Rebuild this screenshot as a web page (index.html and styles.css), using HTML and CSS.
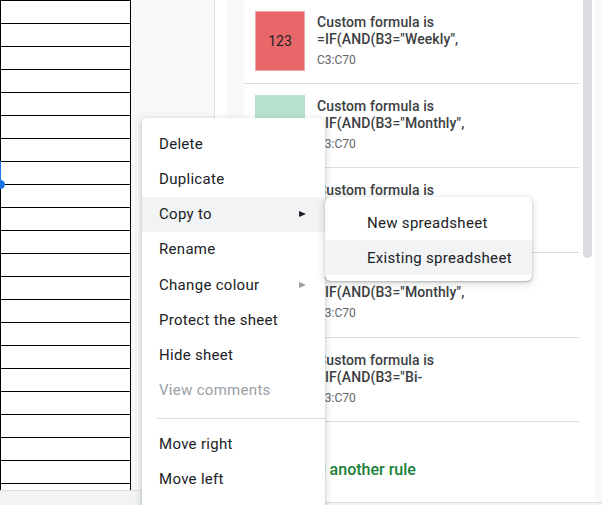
FILE: index.html
```html
<!DOCTYPE html>
<html>
<head>
<meta charset="utf-8">
<link rel="stylesheet" href="styles.css">
</head>
<body>
<div class="app">
  <div class="left">
    <div class="sheet">
      <div class="col">
        <div class="row"></div><div class="row"></div><div class="row"></div><div class="row"></div>
        <div class="row"></div><div class="row"></div><div class="row"></div><div class="row"></div>
        <div class="row"></div><div class="row"></div><div class="row"></div><div class="row"></div>
        <div class="row"></div><div class="row"></div><div class="row"></div><div class="row"></div>
        <div class="row"></div><div class="row"></div><div class="row"></div><div class="row"></div>
        <div class="row"></div><div class="row"></div>
      </div>
      <div class="gutter"></div>
    </div>
    <div class="tabbar"></div>
  </div>
  <div class="sidebar">
    <div class="side-main">
      <div class="pad"></div>
      <div class="gap"></div>
      <div class="card">
        <div class="rule">
          <div class="swatch red">123</div>
          <div class="rule-text">
            <div class="rule-title">Custom formula is<br>=IF(AND(B3="Weekly",</div>
            <div class="rule-range">C3:C70</div>
          </div>
        </div>
        <div class="rule">
          <div class="swatch green"></div>
          <div class="rule-text">
            <div class="rule-title">Custom formula is<br>=IF(AND(B3="Monthly",</div>
            <div class="rule-range">C3:C70</div>
          </div>
        </div>
        <div class="rule tall">
          <div class="swatch green"></div>
          <div class="rule-text">
            <div class="rule-title">Custom formula is<br>=IF(AND(B3="Weekly",</div>
            <div class="rule-range">C3:C70</div>
          </div>
        </div>
        <div class="rule tall">
          <div class="swatch red"></div>
          <div class="rule-text">
            <div class="rule-title">Custom formula is<br>=IF(AND(B3="Monthly",</div>
            <div class="rule-range">C3:C70</div>
          </div>
        </div>
        <div class="rule">
          <div class="swatch green"></div>
          <div class="rule-text">
            <div class="rule-title">Custom formula is<br>=IF(AND(B3="Bi-</div>
            <div class="rule-range">C3:C70</div>
          </div>
        </div>
        <div class="add-rule">
          <svg class="plus" width="18" height="18" viewBox="0 0 24 24"><path d="M19 13h-6v6h-2v-6H5v-2h6V5h2v6h6v2z" fill="#188038"/></svg>
          <span>Add another rule</span>
        </div>
        <div class="scrollbar"></div>
      </div>
      <div class="edge"></div>
    </div>
    <div class="side-bottom"></div>
  </div>
</div>

<div class="sel-line"></div>
<div class="sel-dot"></div>

<div class="menu">
  <div class="item">Delete</div>
  <div class="item">Duplicate</div>
  <div class="item active">Copy to <span class="arrow"></span></div>
  <div class="item">Rename</div>
  <div class="item">Change colour <span class="arrow dim"></span></div>
  <div class="item">Protect the sheet</div>
  <div class="item">Hide sheet</div>
  <div class="item disabled">View comments</div>
  <div class="sep"></div>
  <div class="item">Move right</div>
  <div class="item">Move left</div>
</div>

<div class="submenu">
  <div class="sub-item">New spreadsheet</div>
  <div class="sub-item active">Existing spreadsheet</div>
</div>
</body>
</html>
```

FILE: styles.css
```css
html, body {
  margin: 0;
  padding: 0;
}
body {
  width: 602px;
  height: 505px;
  overflow: hidden;
  position: relative;
  font-family: Roboto, "Liberation Sans", Arial, sans-serif;
  background: #fff;
}
.app {
  display: flex;
  height: 505px;
}
.left {
  width: 214px;
  display: flex;
  flex-direction: column;
}
.sheet {
  height: 490px;
  display: flex;
}
.col {
  width: 131px;
  box-sizing: border-box;
  border-left: 1px solid #000;
  border-right: 1px solid #000;
  overflow: hidden;
  background: #fff;
}
.row {
  height: 23px;
  box-sizing: border-box;
  border-top: 1px solid #000;
}
.gutter {
  flex: 1;
  background: #f7f8f7;
}
.tabbar {
  flex: 1;
  background: #f1f3f4;
  border-top: 1px solid #dadce0;
}
.sidebar {
  flex: 1;
  display: flex;
  flex-direction: column;
  border-left: 1px solid #e2e3e2;
}
.side-main {
  height: 502px;
  display: flex;
}
.pad {
  width: 12px;
  background: #fff;
}
.gap {
  width: 17px;
  background: #f8f9fb;
}
.card {
  width: 351px;
  background: #fff;
  border-radius: 0 0 8px 0;
  position: relative;
  overflow: hidden;
}
.edge {
  flex: 1;
  background: #f8f9fb;
}
.side-bottom {
  flex: 1;
  background: #f1f3f4;
  border-top: 1px solid #dadce0;
}
.rule {
  display: flex;
  margin-right: 16px;
  padding: 11px 0 12px 11px;
  border-bottom: 1px solid #dadce0;
}
.rule.tall {
  padding-bottom: 13px;
}
.swatch {
  width: 50px;
  height: 60px;
  box-sizing: border-box;
  flex: none;
  display: flex;
  align-items: center;
  justify-content: center;
  font-size: 14px;
  color: #202124;
}
.swatch.red {
  background: #e8686a;
  border: 1px solid #f0a9aa;
}
.swatch.green {
  background: #b7e1cd;
}
.rule-text {
  margin-left: 12px;
  padding-top: 3px;
}
.rule-title {
  font-size: 14px;
  line-height: 17px;
  font-weight: 500;
  color: #3c4043;
  letter-spacing: 0.1px;
}
.rule-range {
  margin-top: 4px;
  font-size: 12px;
  line-height: 16px;
  color: #5f6368;
}
.add-rule {
  display: flex;
  align-items: center;
  gap: 10px;
  padding: 38px 0 0 25px;
  font-size: 16px;
  line-height: 20px;
  font-weight: 500;
  color: #188038;
}
.plus {
  flex: none;
}
.scrollbar {
  position: absolute;
  left: 339px;
  top: 0;
  width: 9px;
  height: 258px;
  background: #dadce0;
  border-radius: 0 0 5px 5px;
}
.sel-line {
  position: absolute;
  left: 0;
  top: 161px;
  width: 1px;
  height: 23px;
  background: #1a73e8;
}
.sel-dot {
  position: absolute;
  left: -4px;
  top: 180px;
  width: 9px;
  height: 9px;
  border-radius: 50%;
  background: #1a73e8;
}
.menu {
  position: absolute;
  left: 142px;
  top: 118px;
  width: 183px;
  height: 400px;
  box-sizing: border-box;
  padding: 8px 0;
  background: #fff;
  border-radius: 4px;
  box-shadow: 0 1px 2px rgba(60, 64, 67, .3), 0 2px 6px 2px rgba(60, 64, 67, .15);
}
.item {
  height: 35.25px;
  display: flex;
  align-items: center;
  justify-content: space-between;
  padding: 0 19px 0 17px;
  font-size: 15px;
  letter-spacing: 0.3px;
  color: #202124;
}
.item.active {
  background: #f1f3f4;
}
.item.disabled {
  color: #9aa0a6;
}
.arrow {
  width: 0;
  height: 0;
  border-top: 3.5px solid transparent;
  border-bottom: 3.5px solid transparent;
  border-left: 7px solid #202124;
}
.arrow.dim {
  border-left-color: #a0a0a0;
}
.sep {
  height: 1px;
  margin: 9.5px 0 8px 15px;
  background: #dadce0;
}
.submenu {
  position: absolute;
  left: 325px;
  top: 197px;
  width: 207px;
  box-sizing: border-box;
  padding: 8px 0 6px;
  background: #fff;
  border-radius: 6px;
  box-shadow: 0 1px 2px rgba(60, 64, 67, .3), 0 2px 6px 2px rgba(60, 64, 67, .15);
}
.sub-item {
  height: 35px;
  display: flex;
  align-items: center;
  padding-left: 42px;
  font-size: 15px;
  letter-spacing: 0.3px;
  color: #202124;
}
.sub-item.active {
  background: #f1f3f4;
}
```
